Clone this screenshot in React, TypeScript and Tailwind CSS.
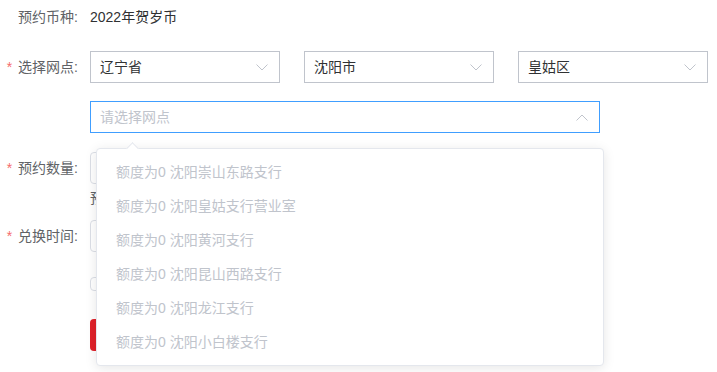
import React from "react";

const font = { fontFamily: '"Liberation Sans", "Noto Sans CJK SC", sans-serif' };

function ChevronDown() {
  return (
    <svg width="12" height="7" viewBox="0 0 12 7" className="shrink-0">
      <polyline points="0.5,0.5 6,6 11.5,0.5" fill="none" stroke="#c0c4cc" strokeWidth="1" />
    </svg>
  );
}

function ChevronUp() {
  return (
    <svg width="12" height="7" viewBox="0 0 12 7" className="shrink-0">
      <polyline points="0.5,6.5 6,1 11.5,6.5" fill="none" stroke="#c0c4cc" strokeWidth="1" />
    </svg>
  );
}

function Label({ text, required }: { text: string; required?: boolean }) {
  return (
    <div className="w-[90px] shrink-0 pr-3 text-right text-sm text-[#606266]">
      {required && <span className="mr-[6px] text-[#f56c6c]">*</span>}
      {text}
    </div>
  );
}

function Select({ value }: { value: string }) {
  return (
    <div className="w-[190px] h-8 flex items-center justify-between border border-[#c0c4cc] bg-white pl-[9px] pr-[11px]">
      <span className="text-sm text-[#303133]">{value}</span>
      <ChevronDown />
    </div>
  );
}

const branches = [
  "沈阳崇山东路支行",
  "沈阳皇姑支行营业室",
  "沈阳黄河支行",
  "沈阳昆山西路支行",
  "沈阳龙江支行",
  "沈阳小白楼支行",
];

export default function App() {
  return (
    <div className="relative w-[717px] h-[372px] bg-white overflow-hidden" style={font}>
      {/* 预约币种 */}
      <div className="flex items-center h-[34px]">
        <Label text="预约币种:" />
        <span className="text-sm text-[#303133]">2022年贺岁币</span>
      </div>

      {/* 选择网点 */}
      <div className="flex items-center mt-[17px]">
        <Label text="选择网点:" required />
        <div className="flex gap-6">
          <Select value="辽宁省" />
          <Select value="沈阳市" />
          <Select value="皇姑区" />
        </div>
      </div>

      <div className="relative ml-[90px] mt-[18px] w-[510px]">
        <div className="h-8 flex items-center justify-between border border-[#409eff] bg-white pl-[9px] pr-[11px]">
          <span className="text-sm text-[#c0c4cc]">请选择网点</span>
          <ChevronUp />
        </div>

        {/* dropdown */}
        <div className="absolute left-[6px] top-[47px] z-10 w-[508px] rounded border border-[#e4e7ed] bg-white py-[6px] shadow-[0_2px_12px_0_rgba(0,0,0,0.1)]">
          <div className="absolute -top-[5px] left-[31px] w-[9px] h-[9px] rotate-45 border-l border-t border-[#e4e7ed] bg-white" />
          {branches.map((b) => (
            <div key={b} className="h-[34px] flex items-center pl-[19px] pr-5 text-sm text-[#c0c4cc]">
              额度为0 {b}
            </div>
          ))}
        </div>
      </div>

      {/* 预约数量 */}
      <div className="flex items-center mt-[19px]">
        <Label text="预约数量:" required />
        <div className="w-[190px] h-8 border border-[#dcdfe6] rounded" />
      </div>
      <div className="ml-[90px] mt-[4px] text-sm text-[#606266]">预约</div>

      {/* 兑换时间 */}
      <div className="flex items-center mt-[12px]">
        <Label text="兑换时间:" required />
        <div className="w-[220px] h-8 border border-[#dcdfe6] rounded" />
      </div>

      <div className="ml-[90px] mt-[25px] flex items-center gap-2">
        <div className="w-[14px] h-[14px] border border-[#dcdfe6] rounded-sm" />
      </div>

      <div className="ml-[90px] mt-[28px] w-[120px] h-8 rounded bg-[#e0212a]" />
    </div>
  );
}
